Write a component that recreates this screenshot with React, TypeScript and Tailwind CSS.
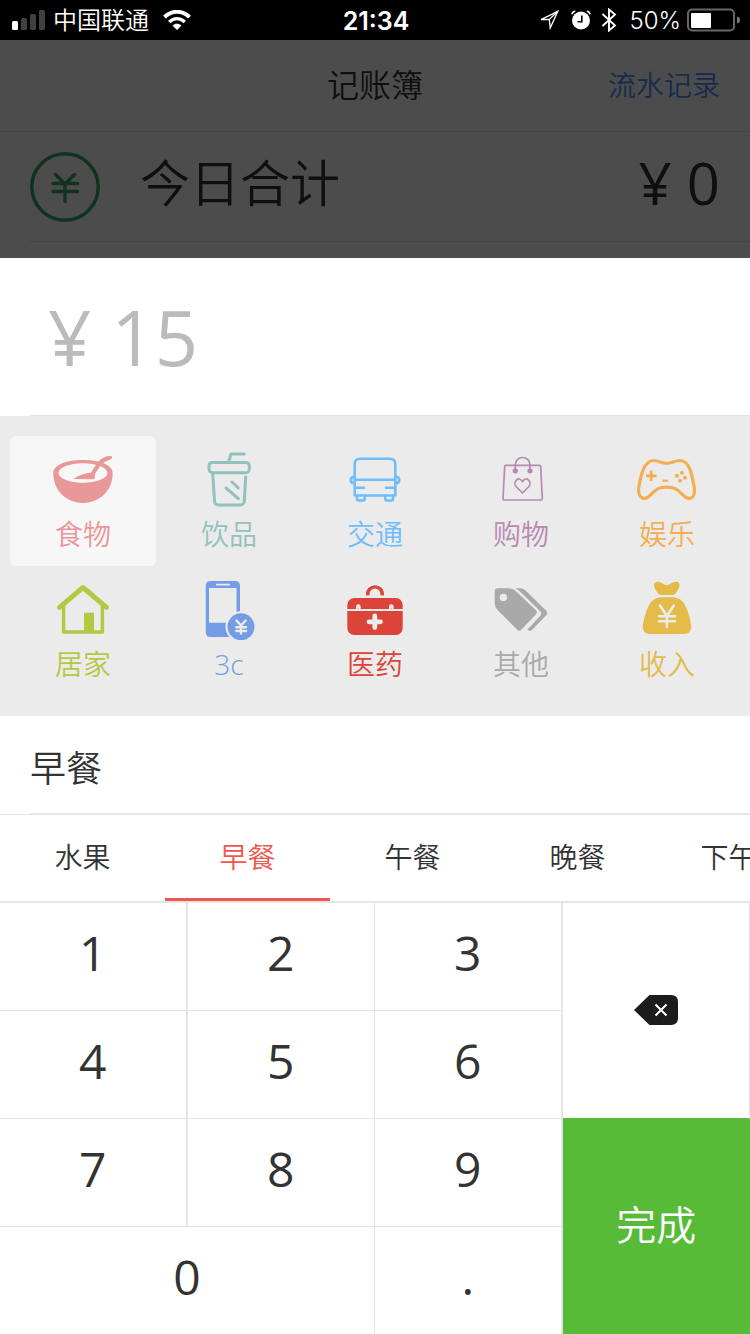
import { useState, type ReactNode } from "react";

const FONT = "font-['Open_Sans','Noto_Sans_CJK_SC',sans-serif] font-[350]";

function StatusBar() {
  return (
    <div className="grid h-10 grid-cols-[1fr_auto_1fr] items-center bg-black pr-2.5 pl-3 font-['Inter','Noto_Sans_CJK_SC',sans-serif] text-2xl leading-9 text-white">
      <div className="flex items-center">
        <svg className="mr-2 h-5 w-[33px]" viewBox="0 0 33 20" aria-hidden="true">
          <rect x="0" y="11" width="6" height="9" rx="1.5" fill="#fff" />
          <rect x="9" y="8" width="6" height="12" rx="1.5" fill="#404040" />
          <rect x="18" y="4" width="6" height="16" rx="1.5" fill="#404040" />
          <rect x="27" y="0" width="6" height="20" rx="1.5" fill="#404040" />
        </svg>
        <span className="pt-0.5">中国联通</span>
        <svg className="ml-3.5 h-5 w-7" viewBox="0 0 28 20" fill="none" stroke="#fff" aria-hidden="true">
          <path d="M1.5 7.2C8.5 0 19.5 0 26.5 7.2" strokeWidth="4" />
          <path d="M6.2 12C10.8 7.5 17.2 7.5 21.8 12" strokeWidth="3.4" />
          <path d="M9.5 15.5C12 13 16 13 18.5 15.5L14 20Z" fill="#fff" stroke="none" />
        </svg>
      </div>
      <span className="pt-0.5 text-[25px] font-semibold">21:34</span>
      <div className="flex items-center justify-end">
        <svg className="h-5 w-5" viewBox="0 0 20 20" fill="none" stroke="#fff" strokeWidth="1.3" aria-hidden="true">
          <path d="M2 9.6L18.8 1.3L11.2 18L10.3 9.4Z" />
          <path d="M10.3 9.4L18.8 1.3" />
        </svg>
        <svg className="ml-3 h-5 w-5" viewBox="0 0 20 20" aria-hidden="true">
          <circle cx="10" cy="10.5" r="9" fill="#fff" />
          <path d="M10.8 5.5V11.8H6.5" fill="none" stroke="#000" strokeWidth="1.6" />
          <path d="M.8 4.2A5 5 0 0 1 4.2 1M19.2 4.2A5 5 0 0 0 15.8 1" fill="none" stroke="#fff" strokeWidth="1.7" />
        </svg>
        <svg className="ml-2.5 h-6 w-4" viewBox="0 0 16 24" fill="none" stroke="#fff" strokeWidth="1.9" aria-hidden="true">
          <path d="M1.5 6L14 17.5L8 22.5V1.5L14 6.5L1.5 18" />
        </svg>
        <span className="mr-1.5 ml-3 pt-0.5">50%</span>
        <svg className="h-6 w-[53px]" viewBox="0 0 53 24" aria-hidden="true">
          <rect x="1" y="1.5" width="46" height="21" rx="4" fill="none" stroke="#666" strokeWidth="2" />
          <rect x="4" y="5" width="20" height="15" rx="1" fill="#fff" />
          <path d="M50 8.500C54 9 54 15 50 15.500Z" fill="#777" />
        </svg>
      </div>
    </div>
  );
}

function Icon({ children }: { children: ReactNode }) {
  return (
    <svg
      className="size-[60px]"
      viewBox="0 0 60 60"
      fill="none"
      stroke="currentColor"
      strokeLinecap="round"
      strokeLinejoin="round"
      aria-hidden="true"
    >
      {children}
    </svg>
  );
}

const categories: { name: string; color: string; icon: ReactNode }[] = [
  {
    name: "食物",
    color: "text-[#e99899]",
    icon: (
      <g fill="currentColor" stroke="none">
        <path
          fillRule="evenodd"
          d="M.3 23C.3 14.500 14 10 30 10S59.700 14.500 59.700 23C59.700 42 45 53 30 53S.3 42 .3 23ZM5.700 23C5.700 28.400 16.500 32.700 30 32.700S54.300 28.400 54.300 23S43.500 13.300 30 13.300S5.700 17.600 5.700 23Z"
        />
        <path d="M20.500 29C26 25 32 23.300 37.800 22.800L45 11.800C49 7.500 54 5.500 58 6C60.300 6.800 59 8.800 57 9.700C53 11.300 50 12 47.800 15.300L42.200 23.500L41.300 29.300Z" />
      </g>
    ),
  },
  {
    name: "饮品",
    color: "text-[#91c2bd]",
    icon: (
      <g strokeWidth="3">
        <path d="M45.300 3.900H32L29.800 11.500" />
        <rect x="10" y="12.400" width="40.300" height="10.400" rx="3.500" />
        <path d="M13.700 23.500L15.500 51Q15.700 55 19.500 55H41Q45 55 45.300 51L46.700 27" />
        <path d="M33 32L39.300 38M27 38L39.300 48.700" />
      </g>
    ),
  },
  {
    name: "交通",
    color: "text-[#6fbefb]",
    icon: (
      <g strokeWidth="2.600">
        <path d="M9.700 45.500V14Q9.700 8.800 15 8.800H45Q50.300 8.800 50.300 14V45.500ZM9.700 29.700H50.300M11 37.700H19M41 37.700H49" />
        <path d="M9.500 26.700C4.500 26.700 4.500 33.300 9.500 33.300M50.500 26.700C55.500 26.700 55.500 33.300 50.500 33.300" />
        <path d="M12 46V48.500Q12 50.500 14 50.500H18Q19.700 50.500 19.700 48.500V46M40.300 46V48.500Q40.300 50.500 42 50.500H46Q48 50.500 48 48.500V46" />
      </g>
    ),
  },
  {
    name: "购物",
    color: "text-[#b789b3]",
    icon: (
      <g strokeWidth="1.700">
        <path d="M14.800 15.300H48.600Q49.700 15.300 49.700 16.300L51.300 48.800Q51.300 50 50 50H13.300Q12 50 12 48.800L13.700 16.300Q13.700 15.300 14.800 15.300Z" />
        <path d="M24.300 20.500V15C24.300 5 39 5 39 15V20.500" />
        <circle cx="24.300" cy="20.800" r="1.800" fill="currentColor" />
        <circle cx="39" cy="20.800" r="1.800" fill="currentColor" />
        <path d="M31.500 43L25 36.500C21.500 32.500 27.500 25 31.500 31.500C35.500 25 41.500 32.500 38 36.500Z" />
      </g>
    ),
  },
  {
    name: "娱乐",
    color: "text-[#f3ae50]",
    icon: (
      <>
        <path
          strokeWidth="3.200"
          d="M29.700 13.300C35 13.300 37.500 10.500 43 10.500C53 10.500 55.500 27 57.300 38C58.500 50 51 50.500 46 45C40 39 38 37.200 29.700 37.200S19.500 39 13.500 45C8.500 50.500 .8 50 1.700 38C3.500 27 6.500 10.500 16.500 10.500C22 10.500 24.500 13.300 29.700 13.300Z"
        />
        <path strokeWidth="2.800" strokeLinecap="butt" d="M9 25.800H19.500M14.200 20.500V31" />
        <path strokeWidth="2.200" strokeLinecap="butt" d="M25.300 30.700H31" />
        <g fill="currentColor" stroke="none">
          <circle cx="45" cy="22.700" r="2" />
          <circle cx="40" cy="25.800" r="2" />
          <circle cx="48" cy="27.800" r="2" />
          <circle cx="43" cy="30.700" r="2" />
        </g>
      </>
    ),
  },
  {
    name: "居家",
    color: "text-[#b5c843]",
    icon: (
      <>
        <path strokeWidth="5" d="M6.500 27.300L30 7.500L53.500 27.300" />
        <path strokeWidth="3.500" d="M10.600 25V52H49.400V25" />
        <path fill="currentColor" stroke="none" d="M31 32.700H41V52H31Z" />
      </>
    ),
  },
  {
    name: "3c",
    color: "text-[#759de5]",
    icon: (
      <>
        <path
          fill="currentColor"
          stroke="none"
          fillRule="evenodd"
          d="M11.700 1H36Q41 1 41 6V52Q41 57 36 57H11.700Q6.700 57 6.700 52V6Q6.700 1 11.700 1ZM10 8V42.700H37.500V8ZM17 3.800V5.500H31V3.800Z"
        />
        <circle cx="42" cy="46.700" r="15.500" fill="#ebebeb" stroke="none" />
        <circle cx="42" cy="46.700" r="13.500" fill="currentColor" stroke="none" />
        <path stroke="#ebebeb" strokeWidth="2.400" d="M37.500 40.500L42 45.500L46.700 40.500M42 45.500V53.500M37.300 47.200H47M37.300 51H47" />
      </>
    ),
  },
  {
    name: "医药",
    color: "text-[#db4439]",
    icon: (
      <>
        <path strokeWidth="3.400" strokeLinecap="butt" d="M22.700 15.300C22 4 38 4 37.300 15.300" />
        <rect x="2.300" y="18" width="55.400" height="37" rx="7" fill="currentColor" stroke="none" />
        <path stroke="#ebebeb" strokeWidth="2.200" strokeLinecap="butt" d="M2 30H58" />
        <circle cx="13.300" cy="26.500" r="2.300" fill="#ebebeb" stroke="none" />
        <circle cx="46.300" cy="26.500" r="2.300" fill="#ebebeb" stroke="none" />
        <path stroke="#ebebeb" strokeWidth="1.600" d="M11.800 27V29M14.800 27V29M44.800 27V29M47.800 27V29" />
        <path stroke="#ebebeb" strokeWidth="4.800" d="M24 41.800H35.500M29.800 36V47.500" />
      </>
    ),
  },
  {
    name: "其他",
    color: "text-[#a9a9a9]",
    icon: (
      <g fill="currentColor" stroke="none">
        <path
          fillRule="evenodd"
          d="M7 8.300H18Q22 8.300 25 11.200L45 30.300Q46.800 32.300 45 34.300L30 50Q28.300 51.500 26.500 50L6.500 30Q3.700 27 3.700 23V11.500Q3.700 8.300 7 8.300ZM12.400 13.700A3.700 3.700 0 1 0 12.400 21.100A3.700 3.700 0 1 0 12.400 13.700Z"
        />
        <path d="M24 8.300H29Q32 8.300 34.500 10.500L55.500 31Q57 33 55.500 35L41 50Q39 51.800 36.300 49.800L49.500 35.500Q51 33.300 49.500 31.500L30 12.500Q27 9.500 24 8.300Z" />
      </g>
    ),
  },
  {
    name: "收入",
    color: "text-[#e4bb49]",
    icon: (
      <>
        <g fill="currentColor" stroke="none">
          <path d="M19.500 2C24 1 26 5 29.700 5S36 1 40.500 2C44 3.500 42.500 7 41 9.500C39 13.500 38 15 35 15H24.500C21.500 15 20.500 13 18.500 9.500C17 7 15.500 3.500 19.500 2Z" />
          <path d="M24 17.300H36C48 17.500 51.500 32 54 44C55 50 52.500 54 47 54H13C7.500 54 5 50 6 44C8.500 32 12 17.500 24 17.300Z" />
        </g>
        <path stroke="#ebebeb" strokeWidth="2.600" d="M23 25.500L29.900 36L36.800 25.500M29.900 36V47M22 36.200H38M22 41.200H38" />
      </>
    ),
  },
];

const tabs = ["水果", "早餐", "午餐", "晚餐", "下午茶"];

const keys = [
  { label: "1", cls: "order-1 border-r-2 border-b" },
  { label: "2", cls: "order-1 border-r border-b" },
  { label: "3", cls: "order-1 border-r-2 border-b" },
  { label: "4", cls: "order-3 border-r-2 border-b" },
  { label: "5", cls: "order-3 border-r border-b" },
  { label: "6", cls: "order-3 border-r-2 border-b" },
  { label: "7", cls: "order-4 border-r-2 border-b" },
  { label: "8", cls: "order-4 border-r border-b" },
  { label: "9", cls: "order-4 border-r-2 border-b" },
  { label: "0", cls: "order-6 col-span-2 border-r" },
  { label: ".", cls: "order-6 border-r-2" },
];

export default function App() {
  const [category, setCategory] = useState("食物");
  const [note, setNote] = useState("早餐");

  return (
    <div className={`flex min-h-screen flex-col overflow-hidden bg-white text-[#333] ${FONT}`}>
      <StatusBar />

      <div className="relative h-[218px] overflow-hidden">
        <header className="grid h-[92px] grid-cols-[1fr_auto_1fr] items-center border-b border-[#e5e5e5] px-[30px] pb-0.5">
          <h1 className="col-start-2 text-[32px] leading-10">记账簿</h1>
          <a href="#records" className="justify-self-end text-[28px] leading-10 text-[#4d8fff]">
            流水记录
          </a>
        </header>
        <div className="ml-[30px] flex h-[110px] items-center border-b border-[#e5e5e5] pr-[30px]">
          <svg className="size-[70px] text-[#38a96f]" viewBox="0 0 70 70" fill="none" stroke="currentColor" strokeWidth="3.500" strokeLinecap="round" aria-hidden="true">
            <circle cx="35" cy="35" r="33.200" />
            <path d="M25.500 22.500L35 32L44.500 22.500M35 32V49.500M23 31.500H47.500M23 39.500H47.500" />
          </svg>
          <span className="ml-10 pb-2 text-[50px] leading-[64px]">今日合计</span>
          <span className="ml-auto pb-2 text-[58px] leading-[64px] font-normal">¥ 0</span>
        </div>
        <div className="absolute inset-0 bg-black/70" />
      </div>

      <div className="h-[157px] px-12">
        <input
          aria-label="金额"
          placeholder="¥ 15"
          className="h-full w-full text-[76px] font-normal placeholder:text-[#bbb] focus:outline-none"
        />
      </div>
      <div className="ml-[30px] border-b border-[#e2e2e2]" />

      <div className="grid grid-cols-5 bg-[#ebebeb] px-2.5 py-5">
        {categories.map((c) => (
          <button
            key={c.name}
            type="button"
            aria-pressed={category === c.name}
            onClick={() => setCategory(c.name)}
            className={`flex h-[130px] flex-col items-center rounded-md pt-3.5 ${c.color} ${category === c.name ? "bg-[#f7f7f7]" : ""}`}
          >
            <Icon>{c.icon}</Icon>
            <span className="mt-1 text-[28px] leading-10">{c.name}</span>
          </button>
        ))}
      </div>

      <div className="ml-[30px] h-[98px] border-b border-[#e5e5e5]">
        <input
          aria-label="备注"
          value={note}
          onChange={(e) => setNote(e.target.value)}
          className="h-full w-full pt-1 text-4xl focus:outline-none"
        />
      </div>

      <div className="flex h-[89px] overflow-hidden border-t border-b-2 border-[#e5e5e5]" role="tablist">
        {tabs.map((t) => (
          <button
            key={t}
            type="button"
            role="tab"
            aria-selected={note === t}
            onClick={() => setNote(t)}
            className={`w-[22%] shrink-0 border-b-[3px] text-[28px] leading-10 ${note === t ? "border-[#f0564f] text-[#f0564f]" : "border-transparent"}`}
          >
            {t}
          </button>
        ))}
      </div>

      <div className="grid grid-cols-4 grid-rows-[108px_108px_108px_107px]">
        {keys.map((k) => (
          <button key={k.label} type="button" className={`${k.cls} border-[#e5e5e5] pb-2 text-5xl font-normal`}>
            {k.label}
          </button>
        ))}
        <button
          type="button"
          aria-label="删除"
          className="order-2 row-span-2 flex items-center justify-center border-r border-b border-r-[#e5e5e5] border-b-[#57bb37] pb-px"
        >
          <svg className="h-[30px] w-11" viewBox="0 0 44 30" aria-hidden="true">
            <path d="M0 15L15.500 0H37Q44 0 44 7V23Q44 30 37 30H15.500Z" fill="#1c1c1c" />
            <path d="M21.500 9.500L32.500 20.500M32.500 9.500L21.500 20.500" stroke="#fff" strokeWidth="2" />
          </svg>
        </button>
        <button type="button" className="order-5 row-span-2 bg-[#57bb37] pb-1 text-[40px] text-white">
          完成
        </button>
      </div>
    </div>
  );
}
